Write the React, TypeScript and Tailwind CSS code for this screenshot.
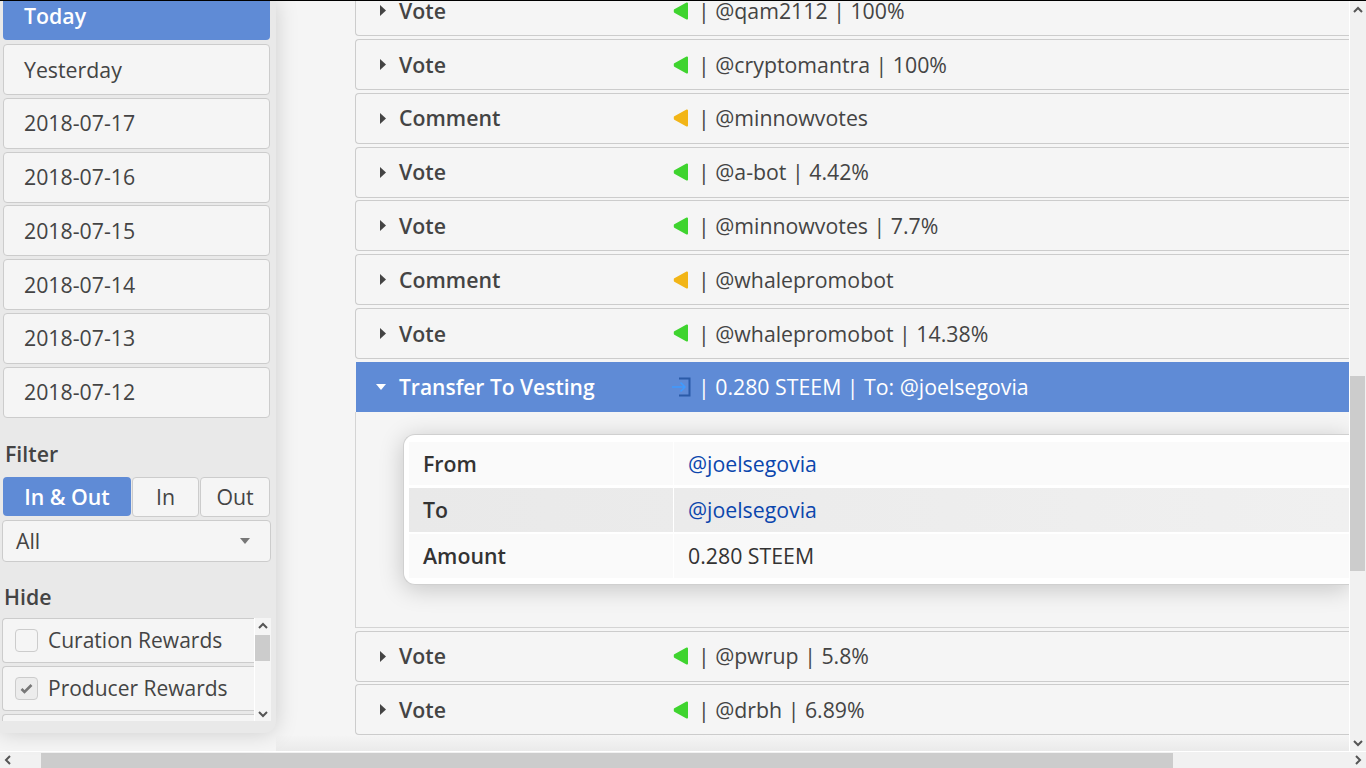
const ACCENT = "bg-[#5f8bd6]";

function Caret({ open }: { open?: boolean }) {
  if (open) {
    return (
      <svg width="10" height="6" viewBox="0 0 10 6" className="shrink-0">
        <path d="M0 0h10L5 6z" fill="#fff" />
      </svg>
    );
  }
  return (
    <svg width="7" height="11" viewBox="0 0 7 11" className="shrink-0">
      <path d="M1 0v11l6-5.5z" fill="#444" />
    </svg>
  );
}

function Flag({ color }: { color: string }) {
  return (
    <svg width="16" height="18" viewBox="0 0 16 18" className="shrink-0">
      <path d="M14 1.5 1.8 8.2v1.6L14 16.5z" fill={color} stroke={color} strokeWidth="2" strokeLinejoin="round" />
    </svg>
  );
}

function VestingIcon() {
  return (
    <svg width="20" height="20" viewBox="0 0 20 20" className="-ml-px shrink-0" fill="none">
      <path d="M7 1.5h10.5v17H7" stroke="#2b5ba8" strokeWidth="2" />
      <path d="M0 10h13M8.5 5.5 13 10l-4.5 4.5" stroke="#3f9bff" strokeWidth="1.5" />
    </svg>
  );
}

const GREEN = "#3fd42f";
const ORANGE = "#f2b517";

function Row({ type, flag, text, extra }: { type: string; flag: string; text: string; extra?: string }) {
  return (
    <div className="flex h-[51px] shrink-0 items-center rounded-l border border-r-0 border-[#cccccc] bg-[#f5f5f5] text-[#444]">
      <div className="flex w-[317px] items-center pl-[23px]">
        <Caret />
        <span className="ml-[13px] font-semibold">{type}</span>
      </div>
      <Flag color={flag} />
      <span className="ml-[9px]">| {text}{extra ? ` | ${extra}` : ""}</span>
    </div>
  );
}

function DetailRow({ label, value, link, shaded }: { label: string; value: string; link?: boolean; shaded?: boolean }) {
  return (
    <div className={`flex flex-1 items-center ${shaded ? "bg-gradient-to-r from-[#e9e9e9] to-[#f0f0f0]" : "bg-[#fafafa]"}`}>
      <div className="flex h-full w-[265px] items-center border-r border-white pl-[14px] font-semibold text-[#333]">{label}</div>
      <div className={`pl-[14px] ${link ? "text-[#0b46ad]" : "text-[#333]"}`}>{value}</div>
    </div>
  );
}

function SideDate({ label }: { label: string }) {
  return (
    <div className="flex h-[51px] shrink-0 items-center rounded border border-[#cccccc] bg-[#f5f5f5] pl-[20px] text-[#444]">
      {label}
    </div>
  );
}

function HideItem({ label, checked }: { label: string; checked?: boolean }) {
  return (
    <div className="flex h-[45px] shrink-0 items-center rounded-l border border-r-0 border-[#cccccc] bg-[#f5f5f5] pl-[12px] text-[21px] text-[#444]">
      <span className={`flex h-[23px] w-[23px] items-center justify-center rounded-sm border border-[#cccccc] ${checked ? "bg-[#ececec]" : "bg-[#f5f5f5]"}`}>
        {checked && (
          <svg width="15" height="13" viewBox="0 0 15 13" fill="none">
            <path d="M2.5 7l3 3L12.5 3" stroke="#777" strokeWidth="2.6" />
          </svg>
        )}
      </span>
      <span className="ml-[10px] pt-[2px]">{label}</span>
    </div>
  );
}

function Chevron({ dir, className }: { dir: "up" | "down" | "left" | "right"; className?: string }) {
  const d = {
    up: "M1 6l4-4 4 4",
    down: "M1 3l4 4 4-4",
    left: "M7 1L3 5l4 4",
    right: "M3 1l4 4-4 4",
  }[dir];
  return (
    <svg width="10" height="10" viewBox="0 0 10 10" fill="none" className={className}>
      <path d={d} stroke="#555" strokeWidth="2" />
    </svg>
  );
}

export default function App() {
  return (
    <div className="flex h-screen w-screen flex-col overflow-hidden bg-[#f5f5f5] font-['Open_Sans',sans-serif] text-[21.3px]">
      <div className="flex min-h-0 flex-1 border-t border-black">
        {/* sidebar */}
        <aside className="z-10 mb-[18px] flex w-[276px] shrink-0 flex-col rounded-br-xl bg-[#e9e9e9] pl-[3px] pr-[6px] shadow-[0_0_22px_rgba(0,0,0,0.17)]">
          <div className="flex h-[39px] shrink-0 items-end rounded-b bg-[#5f8bd6] pb-[14px] pl-[21px] font-semibold leading-none text-white">
            Today
          </div>
          <div className="mt-[4px] flex flex-col gap-[2.75px]">
            <SideDate label="Yesterday" />
            <SideDate label="2018-07-17" />
            <SideDate label="2018-07-16" />
            <SideDate label="2018-07-15" />
            <SideDate label="2018-07-14" />
            <SideDate label="2018-07-13" />
            <SideDate label="2018-07-12" />
          </div>
          <div className="ml-[2px] mt-[21px] font-semibold leading-[29px] text-[#444]">Filter</div>
          <div className="mt-[9px] flex gap-px">
            <div className={`flex h-[39px] w-[128px] items-center justify-center rounded ${ACCENT} pt-[2px] font-semibold text-white`}>In &amp; Out</div>
            <div className="flex h-[40px] w-[67px] items-center justify-center rounded border border-[#cccccc] bg-[#f5f5f5] pt-px text-[#444]">In</div>
            <div className="flex h-[40px] flex-1 items-center justify-center rounded border border-[#cccccc] bg-[#f5f5f5] pt-px text-[#444]">Out</div>
          </div>
          <div className="-ml-px -mr-px mt-[3px] flex h-[42px] shrink-0 items-center justify-between rounded border border-[#cccccc] bg-[#f5f5f5] pl-[13px] pr-[20px] text-[#444]">
            All
            <svg width="10" height="6" viewBox="0 0 10 6"><path d="M0 0h10L5 6z" fill="#777" /></svg>
          </div>
          <div className="ml-px mt-[20px] font-semibold leading-[29px] text-[#444]">Hide</div>
          <div className="-ml-px -mr-px mt-[7px] flex h-[103px] shrink-0 overflow-hidden">
            <div className="flex min-w-0 flex-1 flex-col gap-[3px] overflow-hidden whitespace-nowrap">
              <HideItem label="Curation Rewards" />
              <HideItem label="Producer Rewards" checked />
              <HideItem label="Author Rewards" />
            </div>
            <div className="flex w-[17px] shrink-0 flex-col items-center border-l border-white bg-[#f5f5f5]">
              <Chevron dir="up" className="mt-[4px]" />
              <div className="mt-[3px] h-[26px] w-[15px] self-start bg-[#cccccc]" />
              <Chevron dir="down" className="mt-auto mb-[2px]" />
            </div>
          </div>
        </aside>

        {/* activity list */}
        <main className="flex min-w-0 flex-1 flex-col overflow-hidden">
          <div className="-mt-[15.8px] flex shrink-0 flex-col gap-[2.8px] pl-[79px]">
            <Row type="Vote" flag={GREEN} text="@qam2112" extra="100%" />
            <Row type="Vote" flag={GREEN} text="@cryptomantra" extra="100%" />
            <Row type="Comment" flag={ORANGE} text="@minnowvotes" />
            <Row type="Vote" flag={GREEN} text="@a-bot" extra="4.42%" />
            <Row type="Vote" flag={GREEN} text="@minnowvotes" extra="7.7%" />
            <Row type="Comment" flag={ORANGE} text="@whalepromobot" />
            <Row type="Vote" flag={GREEN} text="@whalepromobot" extra="14.38%" />
            <div className="shrink-0">
              <div className={`ml-px flex h-[50px] items-center ${ACCENT} text-white`}>
                <div className="flex w-[317px] items-center pl-[20px]">
                  <Caret open />
                  <span className="ml-[13px] pt-px text-[21px] font-semibold">Transfer To Vesting</span>
                </div>
                <VestingIcon />
                <span className="ml-[6px]">| 0.280 STEEM | To: @joelsegovia</span>
              </div>
              <div className="h-[216px] border-b border-l border-[#d4d4d4] bg-[#f5f5f5] pl-[47px] pt-[22px]">
                <div className="flex h-[151px] flex-col gap-[2.5px] rounded-l-xl border border-r-0 border-[#d0d0d0] bg-white pb-[6px] pl-[5px] pt-[7px] shadow-[0_4px_24px_rgba(0,0,0,0.2)]">
                  <DetailRow label="From" value="@joelsegovia" link />
                  <DetailRow label="To" value="@joelsegovia" link shaded />
                  <DetailRow label="Amount" value="0.280 STEEM" />
                </div>
              </div>
            </div>
            <Row type="Vote" flag={GREEN} text="@pwrup" extra="5.8%" />
            <Row type="Vote" flag={GREEN} text="@drbh" extra="6.89%" />
          </div>
          <div className="min-h-0 flex-1 bg-gradient-to-b from-[#f5f5f5] to-[#eaeaea]" />
        </main>

        {/* page scrollbar, vertical */}
        <div className="flex w-[17px] shrink-0 flex-col border-l border-white bg-[#f1f1f1]">
          <Chevron dir="up" className="ml-[3px] mt-[5px]" />
          <div className="mt-[360px] h-[195px] w-[15px] bg-[#cccccc]" />
          <Chevron dir="down" className="mb-[3px] ml-[3px] mt-auto" />
        </div>
      </div>

      {/* page scrollbar, horizontal */}
      <div className="flex h-[17px] shrink-0 items-center border-t border-white bg-[#f1f1f1]">
        <Chevron dir="left" className="ml-[3px]" />
        <div className="ml-[28px] h-[15px] w-[1132px] bg-[#cccccc]" />
        <Chevron dir="right" className="ml-auto mr-[3px]" />
      </div>
    </div>
  );
}
